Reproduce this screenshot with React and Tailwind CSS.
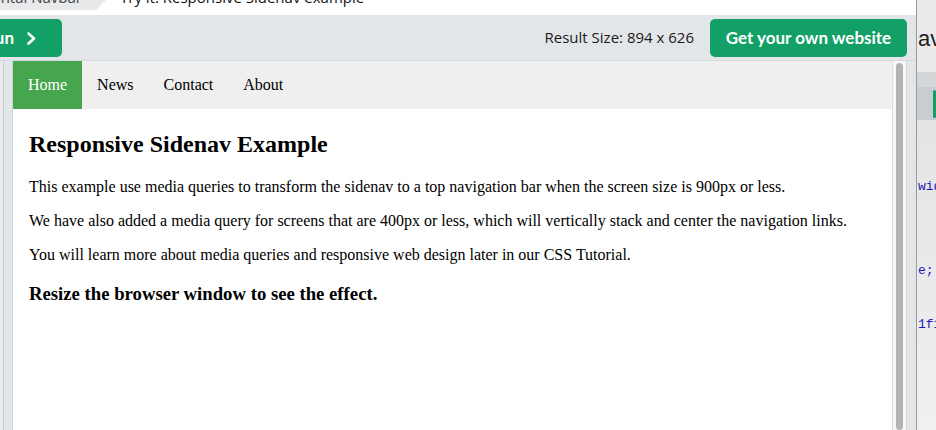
import React from 'react';

const ui = { fontFamily: '"Open Sans", "Liberation Sans", sans-serif' };
const btn = { fontFamily: 'Lato, "Open Sans", sans-serif' };
const serif = { fontFamily: '"Liberation Serif", "DejaVu Serif", serif' };
const mono = { fontFamily: '"Liberation Mono", "DejaVu Sans Mono", monospace' };

const App = () => {
    const links = ['Home', 'News', 'Contact', 'About'];

    return (
        <div className="w-[936px] h-[430px] flex overflow-hidden bg-white">
            {/* Main tryit window */}
            <div className="w-[916px] flex flex-col shrink-0">
                {/* Tabs strip, cut at the top */}
                <div className="h-[15px] flex items-start bg-white overflow-hidden" style={ui}>
                    <div className="flex items-start">
                        <div className="h-[10px] w-[96px] bg-[#e7e9eb] overflow-hidden flex justify-end pr-[14px]">
                            <span className="block -mt-[12px] text-[15px] leading-[18px] text-[#444] whitespace-nowrap">Horizontal Navbar</span>
                        </div>
                        <svg width="10" height="10" viewBox="0 0 10 10" className="block">
                            <polygon points="0,0 10,0 0,10" fill="#e7e9eb" />
                        </svg>
                    </div>
                    <div className="h-[10px] overflow-hidden ml-[14px]">
                        <span className="block -mt-[12px] text-[15px] leading-[18px] text-[#111] whitespace-nowrap">Try it: Responsive Sidenav example</span>
                    </div>
                </div>

                {/* Toolbar */}
                <div className="h-[45px] bg-[#e3e6e9] flex items-center justify-between pr-[9px]">
                    <button className="-ml-[20px] w-[82px] h-[38px] mt-[1px] rounded-[5px] bg-[#13a067] text-white text-[17px] font-bold flex items-center justify-end pr-[26px] gap-[13px]" style={btn}>
                        Run
                        <svg width="9" height="13" viewBox="0 0 9 13" className="block">
                            <polyline points="1.5,1.5 7,6.5 1.5,11.5" fill="none" stroke="white" strokeWidth="2.6" strokeLinecap="round" strokeLinejoin="round" />
                        </svg>
                    </button>
                    <div className="flex items-center gap-[16px]">
                        <span className="text-[15px] text-[#1a1a1a]" style={ui}>Result Size: 894 x 626</span>
                        <button className="w-[197px] h-[38px] mt-[1px] rounded-[5px] bg-[#13a067] text-white text-[17px] font-bold" style={btn}>
                            Get your own website
                        </button>
                    </div>
                </div>

                {/* Result area */}
                <div className="flex-1 flex bg-[#e3e6e9] border-t border-[#d6d9dc] min-h-0">
                    <div className="w-[3px] bg-[#e8eaec]"></div>
                    <div className="w-[1px] bg-[#c8cbcf]"></div>
                    <div className="w-[9px] border-r border-[#cfd2d5]"></div>

                    {/* iframe */}
                    <div className="flex-1 flex bg-white min-w-0" style={serif}>
                        <div className="flex-1 flex flex-col text-black">
                            <div className="flex bg-[#efefef]">
                                {links.map((l, i) => (
                                    <a key={l} className={`px-[15px] py-[14px] text-[16px] leading-[20px] ${i === 0 ? 'bg-[#45a64d] text-white' : 'text-black'}`}>
                                        {l}
                                    </a>
                                ))}
                            </div>
                            <div className="px-[16px] pt-[1px]">
                                <h2 className="text-[24px] font-bold mt-[20px] mb-[20px] leading-[28px]">Responsive Sidenav Example</h2>
                                <p className="text-[16px] leading-[18px] mb-[16px]">This example use media queries to transform the sidenav to a top navigation bar when the screen size is 900px or less.</p>
                                <p className="text-[16px] leading-[18px] mb-[16px]">We have also added a media query for screens that are 400px or less, which will vertically stack and center the navigation links.</p>
                                <p className="text-[16px] leading-[18px]">You will learn more about media queries and responsive web design later in our CSS Tutorial.</p>
                                <h3 className="text-[18.72px] font-bold mt-[19px] leading-[22px]">Resize the browser window to see the effect.</h3>
                            </div>
                        </div>
                        {/* scrollbar */}
                        <div className="w-[14px] flex border-l border-[#dcdcdc] bg-[#f7f7f7] px-[3px] pt-[2px]">
                            <div className="flex-1 rounded-full bg-[#b4b4b4]"></div>
                        </div>
                    </div>

                    <div className="w-[10px] border-l border-[#d2d5d8] bg-[#e3e6e9]"></div>
                </div>
            </div>

            {/* Window behind, right edge */}
            <div className="flex-1 flex flex-col border-l border-[#9a9a9a] bg-[#e9e9e9] overflow-hidden min-w-0">
                <div className="h-[72px] bg-[#ebebeb] overflow-hidden pl-[1px] pt-[27px]">
                    <span className="text-[22px] leading-[24px] text-[#222] whitespace-nowrap" style={{ fontFamily: '"Liberation Sans", sans-serif' }}>avigation</span>
                </div>
                <div className="h-[15px] bg-[#d5d6d8]"></div>
                <div className="h-[33px] bg-[#c9ccd0] flex items-center pl-[16px]">
                    <div className="w-[20px] h-[28px] rounded-[4px] bg-[#13a067]"></div>
                </div>
                <div className="flex-1 bg-gradient-to-b from-[#e4e4e4] to-[#f0f0f0] pl-[1px] text-[13px] leading-[14px] text-[#1a1ab8] whitespace-nowrap" style={mono}>
                    <div className="mt-[60px]">width</div>
                    <div className="mt-[70px]">e;</div>
                    <div className="mt-[40px]">1f1f1</div>
                </div>
            </div>
        </div>
    );
};

export default App;
